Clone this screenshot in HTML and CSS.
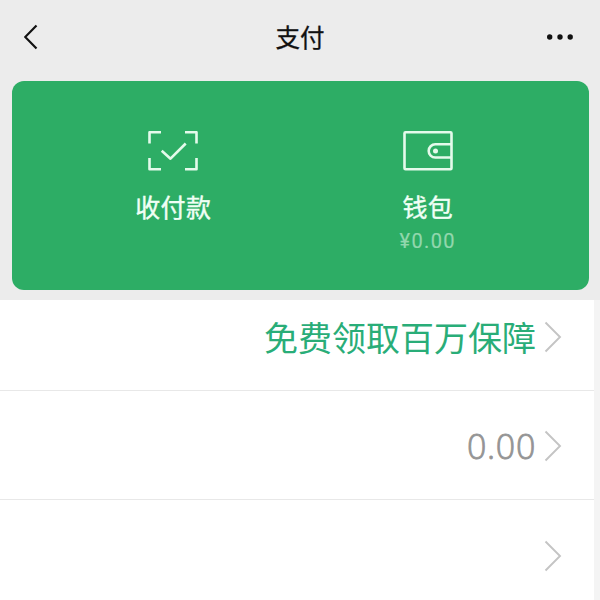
FILE: index.html
```html
<!DOCTYPE html>
<html lang="zh-CN">
<head>
<meta charset="utf-8">
<title>支付</title>
<link rel="stylesheet" href="styles.css">
</head>
<body>
<div class="top">
  <header class="bar">
    <svg class="bar-back" width="20" height="30" viewBox="0 0 20 30"><path d="M12.5 3.5 1.2 15l11.3 11.5"/></svg>
    <h1 class="bar-title">支付</h1>
    <svg class="bar-more" width="28" height="8" viewBox="0 0 28 8"><circle cx="3.7" cy="4" r="2.7"/><circle cx="14" cy="4" r="2.7"/><circle cx="24.2" cy="4" r="2.7"/></svg>
  </header>
  <section class="card">
    <div class="action">
      <svg width="52" height="42" viewBox="0 0 52 42"><path d="M2.500 13.500V2.200H14M38 2.200h11.500v11.300M49.500 28v11.300H38M14 39.300H2.500V28"/><path d="m14.700 20.700 8.800 8L38.700 13.500"/></svg>
      <span class="action-name">收付款</span>
    </div>
    <div class="action">
      <svg width="52" height="42" viewBox="0 0 52 42"><rect x="2.500" y="2.300" width="47" height="37" rx="1"/><path d="M49.500 14.300H33.300a6.600 6.600 0 0 0 0 13.200h16.200"/><circle class="clasp" cx="33.500" cy="20.900" r="2.500"/></svg>
      <span class="action-name">钱包</span>
      <span class="action-amount">¥0.00</span>
    </div>
  </section>
</div>
<main class="list">
  <div class="row row-first"><span class="offer">免费领取百万保障</span><svg class="chevron" width="18" height="32" viewBox="0 0 18 32"><path d="M1.500 1.500 16 16 1.500 30.500"/></svg></div>
  <div class="row"><span class="balance">0.00</span><svg class="chevron" width="18" height="32" viewBox="0 0 18 32"><path d="M1.500 1.500 16 16 1.500 30.500"/></svg></div>
  <div class="row row-last"><svg class="chevron" width="18" height="32" viewBox="0 0 18 32"><path d="M1.500 1.500 16 16 1.500 30.500"/></svg></div>
</main>
</body>
</html>
```
FILE: styles.css
```css
* {
  box-sizing: border-box;
}

body {
  margin: 0;
  height: 600px;
  overflow: hidden;
  background: #f4f4f4;
  font-family: "Noto Sans CJK SC", sans-serif;
}

svg {
  display: block;
  fill: none;
}

.top {
  height: 300px;
  padding: 0 11px 0 12px;
  background: #ececec;
}

.bar {
  display: grid;
  grid-template-columns: 60px 1fr 60px;
  align-items: center;
  height: 81px;
  padding-bottom: 7px;
}

.bar-back {
  margin-left: 12px;
  stroke: #111;
  stroke-width: 2.2;
}

.bar-title {
  margin: 0 1px 0 0;
  text-align: center;
  font-size: 24.5px;
  font-weight: 400;
  line-height: 36px;
  color: #111;
  -webkit-text-stroke: 0.3px #111;
}

.bar-more {
  margin-left: 17px;
  fill: #111;
}

.card {
  display: flex;
  height: 209px;
  padding: 49px 34px 0;
  border-radius: 12px;
  background: #2dad65;
}

.action {
  display: flex;
  flex: 1;
  flex-direction: column;
  align-items: center;
  color: #f0fff5;
}

.action svg {
  stroke: #e4faeb;
  stroke-width: 2.6;
  stroke-linejoin: round;
}

.action .clasp {
  fill: #e4faeb;
  stroke: none;
}

.action-name {
  margin-top: 16px;
  font-size: 25px;
  line-height: 36px;
  letter-spacing: 0.3px;
  -webkit-text-stroke: 0.4px #f0fff5;
}

.action-amount {
  margin-top: 5px;
  font-family: Roboto, sans-serif;
  font-size: 20px;
  line-height: 24px;
  letter-spacing: 1.4px;
  color: #92d7ad;
  -webkit-text-stroke: 0.2px #92d7ad;
}

.list {
  width: 594px;
  background: #fff;
}

.row {
  display: flex;
  align-items: center;
  justify-content: flex-end;
  height: 109px;
  padding: 2px 32px 0 0;
  border-bottom: 1px solid #e8e8e8;
}

.row-first {
  height: 91px;
  padding: 0 32px 16px 0;
}

.row-last {
  padding-top: 4px;
}

.offer {
  margin-right: 8px;
  font-size: 34px;
  line-height: 50px;
  color: #29ad78;
}

.balance {
  margin-right: 8px;
  font-family: "Open Sans", sans-serif;
  font-size: 34px;
  font-weight: 300;
  line-height: 46px;
  letter-spacing: 0.7px;
  color: #949494;
  -webkit-text-stroke: 0.8px #949494;
}

.chevron {
  stroke: #c4c4c4;
  stroke-width: 1.9;
}
```
